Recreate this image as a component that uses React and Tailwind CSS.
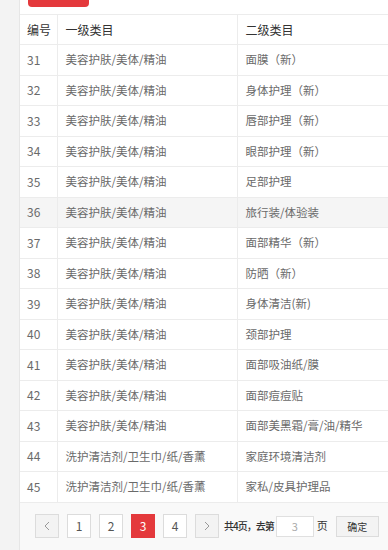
import React from "react";

const rows = [
  [31, "美容护肤/美体/精油", "面膜（新）"],
  [32, "美容护肤/美体/精油", "身体护理（新）"],
  [33, "美容护肤/美体/精油", "唇部护理（新）"],
  [34, "美容护肤/美体/精油", "眼部护理（新）"],
  [35, "美容护肤/美体/精油", "足部护理"],
  [36, "美容护肤/美体/精油", "旅行装/体验装"],
  [37, "美容护肤/美体/精油", "面部精华（新）"],
  [38, "美容护肤/美体/精油", "防晒（新）"],
  [39, "美容护肤/美体/精油", "身体清洁(新)"],
  [40, "美容护肤/美体/精油", "颈部护理"],
  [41, "美容护肤/美体/精油", "面部吸油纸/膜"],
  [42, "美容护肤/美体/精油", "面部痘痘贴"],
  [43, "美容护肤/美体/精油", "面部美黑霜/膏/油/精华"],
  [44, "洗护清洁剂/卫生巾/纸/香薰", "家庭环境清洁剂"],
  [45, "洗护清洁剂/卫生巾/纸/香薰", "家私/皮具护理品"],
];

const pages = [1, 2, 3, 4];

const App = () => {
  return (
    <div
      className="w-[388px] h-[550px] overflow-hidden flex bg-[#f3f3f3] text-[12px]"
      style={{ fontFamily: '"Noto Sans CJK SC", "Noto Sans", sans-serif' }}
    >
      <div className="w-[20px] shrink-0 bg-[#f3f3f3] border-r border-[#e6e6e6]" />
      <div className="flex-1 flex flex-col bg-white overflow-hidden">
        <div className="h-[14px] pl-[8px] overflow-hidden">
          <div className="w-[61px] h-[28px] -mt-[21px] rounded bg-[#e4393c]" />
        </div>
        <table className="w-[480px] table-fixed border-collapse">
          <colgroup>
            <col className="w-[37px]" />
            <col className="w-[180px]" />
            <col />
          </colgroup>
          <thead>
            <tr className="h-[30px] border-t border-b border-[#ececec] text-[#333]">
              <th className="text-left font-normal pl-[7px] border-r border-[#ececec]">编号</th>
              <th className="text-left font-normal pl-[8px] border-r border-[#ececec]">一级类目</th>
              <th className="text-left font-normal pl-[8px]">二级类目</th>
            </tr>
          </thead>
          <tbody>
            {rows.map((r) => (
              <tr
                key={r[0]}
                className={
                  "h-[30.5px] border-b border-[#ececec] text-[#6a6a6a] " +
                  (r[0] === 36 ? "bg-[#f5f5f5]" : "bg-white")
                }
              >
                <td className="pl-[7px] border-r border-[#ececec]">{r[0]}</td>
                <td className="pl-[8px] border-r border-[#ececec] whitespace-nowrap text-[11.5px]">{r[1]}</td>
                <td className="pl-[8px] whitespace-nowrap text-[11.5px]">{r[2]}</td>
              </tr>
            ))}
          </tbody>
        </table>
        <div className="flex-1 bg-[#f9f9f9] pl-[15px] pt-[11px]">
          <div className="flex items-center gap-[8px] text-[#555] whitespace-nowrap">
            <div className="shrink-0 w-[24px] h-[24px] border border-[#dcdcdc] bg-[#f3f3f3] flex items-center justify-center text-[#999]">
              <svg width="8" height="10" viewBox="0 0 8 10" fill="none" stroke="currentColor" strokeWidth="1">
                <path d="M6 1 L2 5 L6 9" />
              </svg>
            </div>
            {pages.map((p) => (
              <div
                key={p}
                className={
                  p === 3
                    ? "shrink-0 w-[24px] h-[24px] bg-[#e4393c] text-white flex items-center justify-center"
                    : "shrink-0 w-[24px] h-[24px] border border-[#dcdcdc] bg-white flex items-center justify-center"
                }
              >
                {p}
              </div>
            ))}
            <div className="shrink-0 w-[24px] h-[24px] border border-[#dcdcdc] bg-[#f3f3f3] flex items-center justify-center text-[#999]">
              <svg width="8" height="10" viewBox="0 0 8 10" fill="none" stroke="currentColor" strokeWidth="1">
                <path d="M2 1 L6 5 L2 9" />
              </svg>
            </div>
            <div className="shrink-0 flex items-center -ml-[3px] text-[#333]">
              <span className="text-[10px] font-medium tracking-[-1px]">共4页，去第</span>
              <div className="shrink-0 ml-[2px] w-[38px] h-[21px] mt-[2px] border border-[#e0e0e0] bg-white text-[#aaa] flex items-center justify-center text-[11px]">
                3
              </div>
              <span className="ml-[3px] text-[11px]">页</span>
              <div className="shrink-0 ml-[8px] w-[43px] h-[21px] mt-[2px] border border-[#dcdcdc] bg-[#f3f3f3] flex items-center justify-center text-[10px]">
                确定
              </div>
            </div>
          </div>
        </div>
      </div>
    </div>
  );
};

export default App;
